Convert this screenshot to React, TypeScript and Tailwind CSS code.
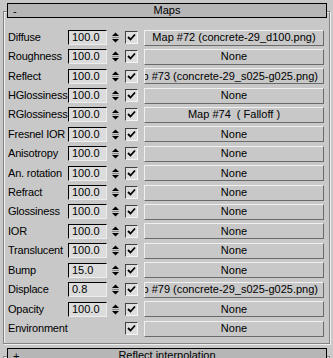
import React from "react";

type Row = {
  label: string;
  value?: string;
  map: string;
  long?: boolean;
  h: 19 | 20;
};

const ROWS: Row[] = [
  { label: "Diffuse", value: "100.0", map: "Map #72 (concrete-29_d100.png)", h: 19 },
  { label: "Roughness", value: "100.0", map: "None", h: 19 },
  { label: "Reflect", value: "100.0", map: "Map #73 (concrete-29_s025-g025.png)", long: true, h: 20 },
  { label: "HGlossiness", value: "100.0", map: "None", h: 19 },
  { label: "RGlossiness", value: "100.0", map: "Map #74  ( Falloff )", h: 19 },
  { label: "Fresnel IOR", value: "100.0", map: "None", h: 20 },
  { label: "Anisotropy", value: "100.0", map: "None", h: 19 },
  { label: "An. rotation", value: "100.0", map: "None", h: 20 },
  { label: "Refract", value: "100.0", map: "None", h: 19 },
  { label: "Glossiness", value: "100.0", map: "None", h: 19 },
  { label: "IOR", value: "100.0", map: "None", h: 20 },
  { label: "Translucent", value: "100.0", map: "None", h: 19 },
  { label: "Bump", value: "15.0", map: "None", h: 20 },
  { label: "Displace", value: "0.8", map: "Map #79 (concrete-29_s025-g025.png)", long: true, h: 19 },
  { label: "Opacity", value: "100.0", map: "None", h: 20 },
  { label: "Environment", map: "None", h: 19 },
];

function Spinner() {
  return (
    <svg width="9" height="15" viewBox="0 0 9 15" className="shrink-0">
      <polygon points="4.5,2.5 8,6 1,6" fill="#000" />
      <line x1="1" y1="7.5" x2="8" y2="7.5" stroke="#8a8a8a" strokeWidth="1" />
      <polygon points="1,9 8,9 4.5,12.5" fill="#000" />
    </svg>
  );
}

function Check() {
  return (
    <div className="w-[13px] h-[13px] shrink-0 bg-[#dedede] border-t border-l border-[#404040] border-b border-r border-b-[#f4f4f4] border-r-[#f4f4f4] flex items-center justify-center">
      <svg width="9" height="9" viewBox="0 0 9 9">
        <path d="M1 4 L3.5 6.5 L8 1.5" fill="none" stroke="#000" strokeWidth="1.8" />
      </svg>
    </div>
  );
}

function RolloutHeader({ title, sign }: { title: string; sign: string }) {
  return (
    <div className="relative h-[15px] bg-[#b6b6b6] border border-black flex items-center justify-center">
      <span className="absolute left-[5px] top-[-1px] text-[11px]">{sign}</span>
      <span className="text-[11px] leading-none">{title}</span>
    </div>
  );
}

export default function App() {
  return (
    <div
      className="w-[333px] h-[358px] overflow-hidden bg-[#c8c8c8] text-black pt-[11px] px-[3px]"
      style={{ fontFamily: '"Liberation Sans", Arial, sans-serif' }}
    >
      {/* Maps rollout */}
      <div className="h-[333px] border border-[#848484] shadow-[inset_1px_1px_0_#efefef,1px_1px_0_#efefef]">
        <div className="-mt-[9px] ml-[3px] mr-[2px]">
          <RolloutHeader title="Maps" sign="-" />
        </div>

        <div className="mt-[10px] pl-[4px] flex flex-col">
          {ROWS.map((row) => (
            <div
              key={row.label}
              className={`flex items-center ${row.h === 20 ? "h-[20px]" : "h-[19px]"}`}
            >
              <span className="w-[60px] shrink-0 text-[11px] tracking-[-0.2px] whitespace-nowrap leading-none">
                {row.label}
              </span>
              {row.value ? (
                <>
                  <div className="w-[39px] h-[15px] shrink-0 bg-[#dcdcdc] border-t border-l border-black border-b border-r border-b-[#ededed] border-r-[#ededed] flex items-center pl-[3px] text-[11px] leading-none">
                    {row.value}
                  </div>
                  <div className="ml-[4px]">
                    <Spinner />
                  </div>
                </>
              ) : (
                <div className="w-[52px] shrink-0" />
              )}
              <div className="ml-[5px]">
                <Check />
              </div>
              <div
                className={`ml-[6px] w-[180px] h-[16px] shrink-0 overflow-hidden border-t border-l border-[#f0f0f0] border-b border-r border-b-[#6a6a6a] border-r-[#6a6a6a] flex items-center text-[11px] leading-none whitespace-pre ${
                  row.long ? "justify-end pr-[5px]" : "justify-center"
                }`}
              >
                {row.map}
              </div>
            </div>
          ))}
        </div>
      </div>

      {/* next rollout, cut off by the window */}
      <div className="mt-[12px] h-[40px] border border-[#848484] shadow-[inset_1px_1px_0_#efefef]">
        <div className="-mt-[9px] ml-[3px] mr-[2px]">
          <RolloutHeader title="Reflect interpolation" sign="+" />
        </div>
      </div>
    </div>
  );
}
